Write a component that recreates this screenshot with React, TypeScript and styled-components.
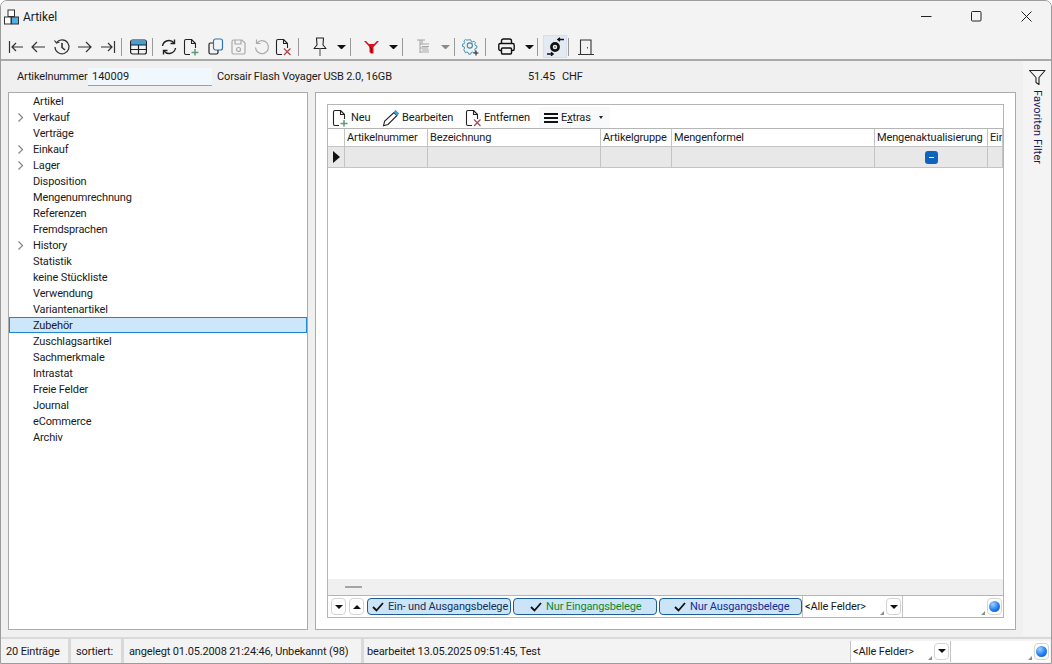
import React from 'react'
import styled, { createGlobalStyle } from 'styled-components'

const GlobalStyle = createGlobalStyle`
  html, body { margin: 0; padding: 0; height: 100%; background: #fff; }
  #root { height: 100%; }
  * { box-sizing: border-box; }
`

const Win = styled.div`
  width: 1052px;
  height: 664px;
  display: flex;
  flex-direction: column;
  background: #f0f0f0;
  border: 1px solid #9c9c9c;
  border-radius: 7px 7px 0 0;
  overflow: hidden;
  font-family: Roboto, 'Liberation Sans', sans-serif;
  font-size: 11px;
  letter-spacing: -0.14px;
  color: #1a1a1a;
`

const TitleBar = styled.div`
  height: 31px;
  flex: none;
  display: flex;
  align-items: center;
  background: #f3f3f3;
  padding-left: 3px;
  gap: 4px;
  font-size: 12px;
  letter-spacing: 0;
`

const WinControls = styled.div`
  margin-left: auto;
  display: flex;
`

const WinButton = styled.div`
  width: 50px;
  height: 31px;
  display: flex;
  align-items: center;
  justify-content: center;
`

const Toolbar = styled.div`
  height: 29px;
  flex: none;
  display: flex;
  align-items: center;
  background: #f3f3f3;
  border-bottom: 2px solid #a9a9a9;
  padding: 2px 0 0 7px;
`

const Tool = styled.div<{ $w: number; $ml: number }>`
  width: ${p => p.$w}px;
  margin-left: ${p => p.$ml}px;
  height: 23px;
  flex: none;
  display: flex;
  align-items: center;
  justify-content: center;
`

const ActiveTool = styled(Tool)`
  background: #e4eaf3;
  border: 1px solid #d5dfee;
`

const Sep = styled.div<{ $ml: number }>`
  width: 1px;
  height: 18px;
  margin-left: ${p => p.$ml}px;
  background: #9a9a9a;
  flex: none;
`

const Drop = styled.div<{ $ml: number; $off?: boolean }>`
  width: 9px;
  height: 0;
  flex: none;
  margin-left: ${p => p.$ml}px;
  border-left: 4.5px solid transparent;
  border-right: 4.5px solid transparent;
  border-top: 4.5px solid ${p => (p.$off ? '#8a8a8a' : '#111')};
`

const Body = styled.div`
  flex: 1;
  min-height: 0;
  display: flex;
`

const LeftColumn = styled.div`
  width: 1022px;
  flex: none;
  display: flex;
  flex-direction: column;
`

const InfoRow = styled.div`
  height: 31px;
  flex: none;
  display: flex;
  align-items: center;
  padding-left: 16px;
`

const InfoLabel = styled.span<{ $w: number }>`
  width: ${p => p.$w}px;
  flex: none;
  white-space: nowrap;
`

const NumberInput = styled.div`
  width: 124px;
  height: 18px;
  flex: none;
  background: #f1f8fd;
  border-bottom: 1px solid #9f9f9f;
  padding-left: 4px;
  line-height: 17px;
  margin-right: 5px;
  letter-spacing: 0;
`

const Main = styled.div`
  flex: 1;
  min-height: 0;
  display: flex;
  padding-left: 7px;
`

const TreePanel = styled.div`
  width: 300px;
  height: 538px;
  flex: none;
  background: #fff;
  border: 1px solid #ababab;
`

const TreeRow = styled.div<{ $sel?: boolean }>`
  height: 16px;
  display: flex;
  align-items: center;
  padding-left: 24px;
  position: relative;
  white-space: nowrap;
  background: ${p => (p.$sel ? '#cce6fa' : 'transparent')};
  outline: ${p => (p.$sel ? '1px solid #1f86cf' : 'none')};
  outline-offset: -1px;
`

const Chevron = styled.svg`
  position: absolute;
  left: 8px;
  top: 4px;
`

const ContentPanel = styled.div`
  width: 701px;
  height: 538px;
  margin-left: 7px;
  flex: none;
  background: #fff;
  border: 1px solid #ababab;
  padding: 11px;
`

const Grid = styled.div`
  width: 677px;
  height: 514px;
  border: 1px solid #b5b5b5;
  display: flex;
  flex-direction: column;
`

const GridTools = styled.div`
  height: 24px;
  flex: none;
  display: flex;
  align-items: flex-end;
  border-bottom: 1px solid #b5b5b5;
  padding-left: 3px;
`

const GridTool = styled.div<{ $hl?: boolean; $w: number }>`
  display: flex;
  align-items: center;
  height: 21px;
  width: ${p => p.$w}px;
  flex: none;
  gap: 2px;
  background: ${p => (p.$hl ? '#f7f9fb' : 'transparent')};
  padding-left: ${p => (p.$hl ? 4 : 0)}px;
`

const SmallCaret = styled.span`
  width: 0;
  height: 0;
  margin-left: 6px;
  border-left: 2px solid transparent;
  border-right: 2px solid transparent;
  border-top: 3px solid #222;
`

const HeadRow = styled.div`
  height: 18px;
  flex: none;
  display: flex;
  border-bottom: 1px solid #c4c4c4;
`

const DataRow = styled.div`
  height: 21px;
  flex: none;
  display: flex;
  background: #e8e8e8;
  border-bottom: 1px solid #c4c4c4;
`

const Cell = styled.div<{ $w: number; $center?: boolean }>`
  width: ${p => p.$w}px;
  flex: none;
  display: flex;
  align-items: center;
  justify-content: ${p => (p.$center ? 'center' : 'flex-start')};
  padding-left: ${p => (p.$center ? 0 : 2)}px;
  border-right: 1px solid #c4c4c4;
  overflow: hidden;
  white-space: nowrap;
`

const MinusBox = styled.div`
  width: 13px;
  height: 13px;
  background: #0f63bd;
  border-radius: 3px;
  display: flex;
  align-items: center;
  justify-content: center;
  &::after {
    content: '';
    width: 5px;
    height: 1px;
    background: #fff;
  }
`

const RowMarker = styled.div`
  width: 0;
  height: 0;
  border-top: 6px solid transparent;
  border-bottom: 6px solid transparent;
  border-left: 7px solid #111;
  margin-left: 3px;
`

const GridBody = styled.div`
  flex: 1;
  background: #fff;
`

const GroupStrip = styled.div`
  height: 16px;
  flex: none;
  background: #f0f0f0;
  display: flex;
  align-items: center;
  padding-left: 17px;
  &::before {
    content: '';
    width: 17px;
    height: 2px;
    background: #a5a5a5;
  }
`

const GridFooter = styled.div`
  height: 22px;
  flex: none;
  display: flex;
  align-items: center;
  border-top: 1px solid #b5b5b5;
  background: #fff;
  padding-left: 3px;
`

const ArrowBtn = styled.div<{ $ml?: number; $up?: boolean }>`
  width: 15px;
  height: 17px;
  flex: none;
  margin-left: ${p => p.$ml ?? 0}px;
  background: #fff;
  border: 1px solid #d4d4d4;
  border-radius: 4px;
  display: flex;
  align-items: center;
  justify-content: center;
  &::after {
    content: '';
    border-left: 4px solid transparent;
    border-right: 4px solid transparent;
    ${p => (p.$up ? 'border-bottom: 4px solid #111;' : 'border-top: 4px solid #111;')}
  }
`

const Chip = styled.div<{ $w: number; $color: string; $ml: number; $pad: number }>`
  width: ${p => p.$w}px;
  margin-left: ${p => p.$ml}px;
  height: 17px;
  flex: none;
  padding-left: ${p => p.$pad}px;
  display: flex;
  align-items: center;
  gap: 4px;
  background: #cce4f7;
  border: 1px solid #1c5f94;
  border-radius: 4px;
  color: ${p => p.$color};
  white-space: nowrap;
`

const Combo = styled.div<{ $w?: number }>`
  width: ${p => (p.$w ? `${p.$w}px` : 'auto')};
  flex: ${p => (p.$w ? 'none' : 1)};
  height: 100%;
  display: flex;
  align-items: center;
  justify-content: space-between;
  padding: 0 1px 0 2px;
  border-left: 1px solid #c4c4c4;
  position: relative;
  background: #fff;
  white-space: nowrap;
`

const Grip = styled.span`
  position: absolute;
  right: 18px;
  bottom: 2px;
  width: 0;
  height: 0;
  border-left: 4px solid transparent;
  border-bottom: 4px solid #8c8c8c;
`

const Orb = styled.div`
  width: 15px;
  height: 17px;
  flex: none;
  border: 1px solid #d4d4d4;
  border-radius: 4px;
  display: flex;
  align-items: center;
  justify-content: center;
  &::after {
    content: '';
    width: 11px;
    height: 11px;
    border-radius: 50%;
    background: radial-gradient(circle at 35% 30%, #9fd0ff, #1e7df0 55%, #0a4fb5);
  }
`

const FavSide = styled.div`
  flex: 1;
  height: 575px;
  background: #f4f4f4;
  display: flex;
  flex-direction: column;
  align-items: center;
  padding-top: 9px;
`

const FavText = styled.div`
  writing-mode: vertical-rl;
  margin-top: 5px;
  color: #1a1a5a;
  white-space: nowrap;
  letter-spacing: 0.1px;
`

const StatusBar = styled.div`
  height: 26px;
  flex: none;
  display: flex;
  align-items: center;
  background: #f3f3f3;
  border-top: 2px solid #d9d9d9;
`

const StatusCell = styled.div<{ $w: number }>`
  width: ${p => p.$w}px;
  height: 100%;
  flex: none;
  display: flex;
  align-items: center;
  padding-left: 5px;
  border-right: 3px solid #d9d9d9;
  white-space: nowrap;
`

const StatusText = styled.span`
  padding-left: 3px;
  white-space: nowrap;
`

const StatusRight = styled.div`
  margin-left: auto;
  height: 21px;
  display: flex;
  padding-right: 1px;
`

const Ico = ({ w = 18, children }: { w?: number; children: React.ReactNode }) => (
  <svg width={w} height={18} viewBox={`0 0 ${w} 18`} fill="none" stroke="#333" strokeWidth="1.2">
    {children}
  </svg>
)

const PageIcon = ({ badge }: { badge?: 'plus' | 'x' }) => (
  <svg width={18} height={18} viewBox="0 0 18 18" fill="none" stroke="#222" strokeWidth="1.1">
    <path d="M8 16.5H4A1.5 1.5 0 0 1 2.500 15V3A1.500 1.500 0 0 1 4 1.500h5.500l4 4V10M9.500 1.500v4h4" strokeLinejoin="round" />
    {badge === 'plus' && <path d="M13 11v6.500M9.500 14.500h7" stroke="#5a9a7a" strokeWidth="1.500" />}
    {badge === 'x' && <path d="M10 10.500l6.500 6.500M16.500 10.500L10 17" stroke="#a8444c" strokeWidth="1.200" />}
  </svg>
)

const toolIcons = {
  first: (
    <Ico w={16}>
      <path d="M1.500 3v12M15 9H4M8 5L4 9l4 4" />
    </Ico>
  ),
  back: (
    <Ico w={16}>
      <path d="M15 9H2M7 4L2 9l5 5" />
    </Ico>
  ),
  history: (
    <Ico>
      <path d="M3.500 4.500A7 7 0 1 1 2 9" />
      <path d="M1.500 2.500l2 2.500 3-1" />
      <path d="M9 5v4.500l3 2.500" strokeWidth="1.600" />
    </Ico>
  ),
  forward: (
    <Ico w={16}>
      <path d="M1 9h13M9 4l5 5-5 5" />
    </Ico>
  ),
  last: (
    <Ico w={16}>
      <path d="M14.500 3v12M1 9h11M8 5l4 4-4 4" />
    </Ico>
  ),
  table: (
    <svg width={17} height={16} viewBox="0 0 17 16" fill="none">
      <rect x=".6" y="1" width="15.800" height="14" rx="2" stroke="#222" strokeWidth="1.200" />
      <path d="M1 1.500h15V6H1z" fill="#3fa0dc" />
      <path d="M1 6h15M1 10.500h15M8.500 6v9" stroke="#222" strokeWidth="1.200" />
    </svg>
  ),
  refresh: (
    <svg width={18} height={18} viewBox="0 0 18 18" fill="none" stroke="#222" strokeWidth="1.400">
      <path d="M2.500 8A6.500 6.500 0 0 1 14 5M15.500 10A6.500 6.500 0 0 1 4 13" />
      <path d="M14.500 1.500V5.500H10.500M3.500 16.500V12.500H7.500" />
    </svg>
  ),
  copy: (
    <svg width={16} height={18} viewBox="0 0 16 18" fill="none" strokeWidth="1.200">
      <rect x="5.500" y="1" width="9" height="11" rx="2" stroke="#2a78b8" />
      <path d="M5 5H2.500A1.500 1.500 0 0 0 1 6.500v8A1.500 1.500 0 0 0 2.500 16h6a1.500 1.500 0 0 0 1.500-1.500V12" stroke="#222" />
    </svg>
  ),
  save: (
    <svg width={15} height={16} viewBox="0 0 15 16" fill="none" stroke="#a9a9a9" strokeWidth="1.200">
      <path d="M1 2.500A1.500 1.500 0 0 1 2.500 1H11l3 3v9.500A1.500 1.500 0 0 1 12.500 15h-10A1.500 1.500 0 0 1 1 13.500z" />
      <path d="M4 1v4h6V1" />
      <circle cx="7.500" cy="10.500" r="2" />
    </svg>
  ),
  undo: (
    <Ico>
      <path d="M4 5A6.500 6.500 0 1 1 2.500 9.500" stroke="#ababab" />
      <path d="M3.500 1.500V5.500H7.500" stroke="#ababab" />
    </Ico>
  ),
  pin: (
    <svg width={16} height={19} viewBox="0 0 16 19" fill="none" stroke="#222" strokeWidth="1.100">
      <path d="M4.500 1h7l-.5 7 3 3.500H2L5 8z" strokeLinejoin="round" />
      <path d="M8 11.500V19" stroke="#888" strokeWidth="1.600" />
    </svg>
  ),
  filter: (
    <svg width={15} height={14} viewBox="0 0 15 14">
      <path d="M0 1l2 0 3 3h5l3-3h2L9.500 7v6.500H7L5.500 12V7z" fill="#d8101c" />
      <path d="M5.500 7l2 1.500V13" stroke="#222" fill="none" />
    </svg>
  ),
  tree: (
    <svg width={14} height={16} viewBox="0 0 14 16" fill="none" stroke="#a8a8a8" strokeWidth="1.100">
      <path d="M0 1h8M3 1v13M3 5h9M5 5V1M3 9h8M3 13h9M5 7.500h7M5 11h7" />
    </svg>
  ),
  gear: (
    <svg width={18} height={18} viewBox="0 0 18 18" fill="none" stroke="#3b87b5" strokeWidth="1.100">
      <path d="M6.200 1h2.600l.5 1.900 1.500.6 1.700-1 1.900 1.900-1 1.700.6 1.500 1.900.5v2.600l-1.900.5-.6 1.500 1 1.700-1.900 1.900-1.700-1-1.500.6-.5 1.900H6.200l-.5-1.900-1.500-.6-1.700 1L.6 12.400l1-1.700-.6-1.500-1.900-.5V6.100L1 5.600l.6-1.500-1-1.700L2.500.5l1.700 1 1.500-.6z" transform="translate(1.300 1) scale(.85)" />
      <circle cx="7.800" cy="7.500" r="2.600" />
      <path d="M14 12.500v5M11.500 15h5" stroke="#222" />
    </svg>
  ),
  print: (
    <svg width={17} height={17} viewBox="0 0 17 17" fill="none" stroke="#111" strokeWidth="1.400">
      <path d="M3.500 5.500V3a2 2 0 0 1 2-2h6a2 2 0 0 1 2 2v2.500" />
      <rect x=".8" y="5.500" width="15.400" height="7" rx="1.500" />
      <rect x="3.500" y="10" width="10" height="6" rx="1" fill="#f3f3f3" />
    </svg>
  ),
  sync: (
    <svg width={19} height={19} viewBox="0 0 19 19" fill="none">
      <circle cx="9" cy="10" r="3.600" stroke="#111" strokeWidth="2.600" />
      <circle cx="9" cy="10" r=".9" fill="#777" />
      <path d="M18 2.500h-6.500M14 .7l-2.200 1.800L14 4.300" stroke="#111" strokeWidth="1.300" />
      <path d="M1 17h6.500M5 15.200L7.200 17 5 18.800" stroke="#111" strokeWidth="1.300" />
    </svg>
  ),
  door: (
    <svg width={16} height={16} viewBox="0 0 16 16" fill="none" stroke="#333" strokeWidth="1.100">
      <path d="M0 15.500h16M2.500 15.500V1h10.500v14.500" />
      <path d="M9.500 8v1.500" stroke="#555" />
    </svg>
  ),
}

const ChipCheck = () => (
  <svg width={12} height={10} viewBox="0 0 12 10" fill="none" stroke="#111" strokeWidth="1.800">
    <path d="M1 5l3.500 3.500L11 1" />
  </svg>
)

const treeItems: [string, boolean][] = [
  ['Artikel', false], ['Verkauf', true], ['Verträge', false], ['Einkauf', true], ['Lager', true],
  ['Disposition', false], ['Mengenumrechnung', false], ['Referenzen', false], ['Fremdsprachen', false],
  ['History', true], ['Statistik', false], ['keine Stückliste', false], ['Verwendung', false],
  ['Variantenartikel', false], ['Zubehör', false], ['Zuschlagsartikel', false], ['Sachmerkmale', false],
  ['Intrastat', false], ['Freie Felder', false], ['Journal', false], ['eCommerce', false], ['Archiv', false],
]

const columns: [string, number][] = [
  ['', 17], ['Artikelnummer', 83], ['Bezeichnung', 173], ['Artikelgruppe', 71],
  ['Mengenformel', 203], ['Mengenaktualisierung', 113], ['Ein', 15],
]

export default function App() {
  return (
    <>
      <GlobalStyle />
      <Win>
        <TitleBar>
          <svg width={15} height={16} viewBox="0 0 15 16" fill="none" stroke="#333" strokeWidth="1">
            <rect x="4" y="1" width="6.500" height="6.500" fill="#fff" />
            <rect x=".5" y="8" width="6.500" height="7" fill="#fff" />
            <rect x="7.500" y="8" width="7" height="7" fill="#4fb0e6" />
          </svg>
          Artikel
          <WinControls>
            <WinButton>
              <svg width={11} height={11} stroke="#222"><path d="M0 5.500h10.500" /></svg>
            </WinButton>
            <WinButton>
              <svg width={11} height={11} fill="none" stroke="#222"><rect x=".5" y=".5" width="9.500" height="9.500" rx="1" /></svg>
            </WinButton>
            <WinButton>
              <svg width={11} height={11} stroke="#222"><path d="M.5.500l10 10M10.500.500l-10 10" /></svg>
            </WinButton>
          </WinControls>
        </TitleBar>

        <Toolbar>
          <Tool $w={16} $ml={0}>{toolIcons.first}</Tool>
          <Tool $w={16} $ml={6}>{toolIcons.back}</Tool>
          <Tool $w={18} $ml={7}>{toolIcons.history}</Tool>
          <Tool $w={16} $ml={6}>{toolIcons.forward}</Tool>
          <Tool $w={16} $ml={7}>{toolIcons.last}</Tool>
          <Sep $ml={5} />
          <Tool $w={17} $ml={8}>{toolIcons.table}</Tool>
          <Sep $ml={5} />
          <Tool $w={18} $ml={7}>{toolIcons.refresh}</Tool>
          <Tool $w={18} $ml={4}><PageIcon badge="plus" /></Tool>
          <Tool $w={16} $ml={8}>{toolIcons.copy}</Tool>
          <Tool $w={15} $ml={7}>{toolIcons.save}</Tool>
          <Tool $w={18} $ml={7}>{toolIcons.undo}</Tool>
          <Tool $w={18} $ml={3}><PageIcon badge="x" /></Tool>
          <Sep $ml={6} />
          <Tool $w={16} $ml={13}>{toolIcons.pin}</Tool>
          <Drop $ml={9} />
          <Sep $ml={4} />
          <Tool $w={15} $ml={13}>{toolIcons.filter}</Tool>
          <Drop $ml={10} />
          <Sep $ml={4} />
          <Tool $w={14} $ml={14}>{toolIcons.tree}</Tool>
          <Drop $ml={10} $off />
          <Sep $ml={4} />
          <Tool $w={18} $ml={7}>{toolIcons.gear}</Tool>
          <Sep $ml={5} />
          <Tool $w={17} $ml={12}>{toolIcons.print}</Tool>
          <Drop $ml={10} />
          <Sep $ml={3} />
          <ActiveTool $w={24} $ml={5}>{toolIcons.sync}</ActiveTool>
          <Sep $ml={1} />
          <Tool $w={16} $ml={9}>{toolIcons.door}</Tool>
        </Toolbar>

        <Body>
          <LeftColumn>
            <InfoRow>
              <InfoLabel $w={71}>Artikelnummer</InfoLabel>
              <NumberInput>140009</NumberInput>
              <InfoLabel $w={311}>Corsair Flash Voyager USB 2.0, 16GB</InfoLabel>
              <InfoLabel $w={34}>51.45</InfoLabel>
              <InfoLabel $w={30}>CHF</InfoLabel>
            </InfoRow>

            <Main>
              <TreePanel>
                {treeItems.map(([label, expandable]) => (
                  <TreeRow key={label} $sel={label === 'Zubehör'}>
                    {expandable && (
                      <Chevron width={8} height={9} fill="none" stroke="#8a8a8a" strokeWidth="1.300">
                        <path d="M1.500.500l4 4-4 4" />
                      </Chevron>
                    )}
                    {label}
                  </TreeRow>
                ))}
              </TreePanel>

              <ContentPanel>
                <Grid>
                  <GridTools>
                    <GridTool $w={51}><PageIcon badge="plus" />Neu</GridTool>
                    <GridTool $w={82}>
                      <svg width={18} height={18} viewBox="0 0 18 18" fill="none" stroke="#222" strokeWidth="1.100">
                        <path d="M12 3.500l3 3L6 15.500l-4.500 1.200L2.700 12z" />
                        <path d="M12.500 3l1-1.500 3 3-1.500 1.500z" fill="#3fa0dc" stroke="#3fa0dc" />
                      </svg>
                      Bearbeiten
                    </GridTool>
                    <GridTool $w={75}><PageIcon badge="x" />Entfernen</GridTool>
                    <GridTool $w={71} $hl>
                      <svg width={16} height={12} stroke="#111" strokeWidth="2"><path d="M1 2h14M1 6h14M1 10h14" /></svg>
                      <span>E<u>x</u>tras</span>
                      <SmallCaret />
                    </GridTool>
                  </GridTools>

                  <HeadRow>
                    {columns.map(([title, w]) => (
                      <Cell key={title || 'marker'} $w={w}>{title}</Cell>
                    ))}
                  </HeadRow>
                  <DataRow>
                    {columns.map(([title, w], i) => (
                      <Cell key={title || 'marker'} $w={w} $center={title === 'Mengenaktualisierung'}>
                        {i === 0 && <RowMarker />}
                        {title === 'Mengenaktualisierung' && <MinusBox />}
                      </Cell>
                    ))}
                  </DataRow>
                  <GridBody />
                  <GroupStrip />
                  <GridFooter>
                    <ArrowBtn />
                    <ArrowBtn $ml={3} $up />
                    <Chip $w={144} $ml={3} $color="#15305a" $pad={4}><ChipCheck />Ein- und Ausgangsbelege</Chip>
                    <Chip $w={144} $ml={2} $color="#0c8a2c" $pad={16}><ChipCheck />Nur Eingangsbelege</Chip>
                    <Chip $w={143} $ml={2} $color="#142c9c" $pad={14}><ChipCheck />Nur Ausgangsbelege</Chip>
                    <Combo $w={100}>
                      &lt;Alle Felder&gt;
                      <ArrowBtn />
                      <Grip />
                    </Combo>
                    <Combo>
                      <span />
                      <Orb />
                      <Grip />
                    </Combo>
                  </GridFooter>
                </Grid>
              </ContentPanel>
            </Main>
          </LeftColumn>

          <FavSide>
            <svg width={17} height={15} viewBox="0 0 17 15" fill="none" stroke="#222" strokeWidth="1.100">
              <path d="M.5.500h15.500L10 7.500v7L7 12.500v-5z" strokeLinejoin="round" />
            </svg>
            <FavText>Favoriten Filter</FavText>
          </FavSide>
        </Body>

        <StatusBar>
          <StatusCell $w={70}>20 Einträge</StatusCell>
          <StatusCell $w={53}>sortiert:</StatusCell>
          <StatusCell $w={240}>angelegt 01.05.2008 21:24:46, Unbekannt (98)</StatusCell>
          <StatusText>bearbeitet 13.05.2025 09:51:45, Test</StatusText>
          <StatusRight>
            <Combo $w={100}>
              &lt;Alle Felder&gt;
              <ArrowBtn />
              <Grip />
            </Combo>
            <Combo $w={100}>
              <span />
              <Orb />
              <Grip />
            </Combo>
          </StatusRight>
        </StatusBar>
      </Win>
    </>
  )
}
